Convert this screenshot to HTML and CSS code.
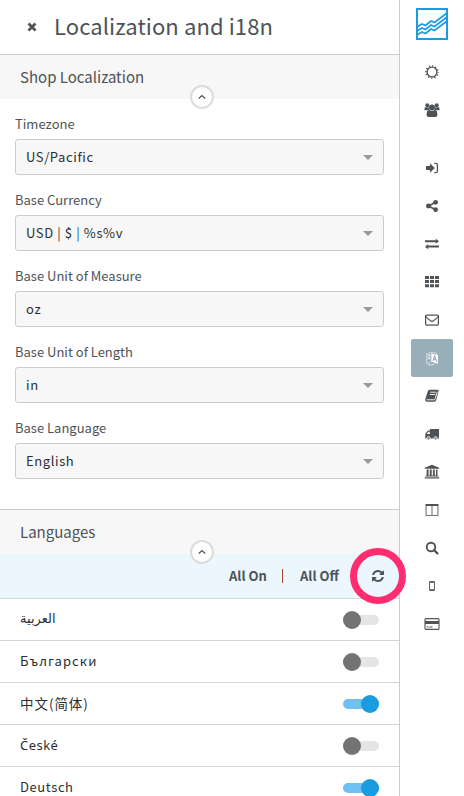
FILE: index.html
```html
<!DOCTYPE html>
<html lang="en">
<head>
<meta charset="utf-8">
<title>Localization and i18n</title>
<link rel="stylesheet" href="styles.css">
</head>
<body>
<div class="app">
  <main class="panel">
    <header class="panel-header">
      <svg class="close" viewBox="0 0 10 10"><path d="M1.5 1.5l7 7M8.500 1.500l-7 7" stroke="currentColor" stroke-width="2.7"/></svg>
      <h1 class="title">Localization and i18n</h1>
    </header>

    <section class="shop">
      <div class="section-head">
        <h2 class="section-title">Shop Localization</h2>
        <span class="collapse"><svg viewBox="0 0 10 10"><path d="M1.800 6.500L5 3.500l3.200 3"/></svg></span>
      </div>
      <div class="fields">
        <div class="field"><div class="label">Timezone</div><div class="select"><span>US/Pacific</span><i class="caret"></i></div></div>
        <div class="field"><div class="label">Base Currency</div><div class="select"><span>USD <span class="bar-red">|</span> $ <span class="bar-blue">|</span> %s%v</span><i class="caret"></i></div></div>
        <div class="field"><div class="label">Base Unit of Measure</div><div class="select"><span>oz</span><i class="caret"></i></div></div>
        <div class="field"><div class="label">Base Unit of Length</div><div class="select"><span>in</span><i class="caret"></i></div></div>
        <div class="field"><div class="label">Base Language</div><div class="select"><span>English</span><i class="caret"></i></div></div>
      </div>
    </section>

    <section class="languages">
      <div class="section-head">
        <h2 class="section-title">Languages</h2>
        <span class="collapse"><svg viewBox="0 0 10 10"><path d="M1.800 6.500L5 3.500l3.200 3"/></svg></span>
      </div>
      <div class="toolbar">
        <b class="all-on">All On</b>
        <i class="divider"></i>
        <b class="all-off">All Off</b>
        <span class="refresh">
          <svg viewBox="0 0 1536 1536"><path fill="currentColor" d="M1511 928q0 5-1 7-64 268-268 434.500T764 1536q-146 0-282.500-55T238 1324l-129 129q-19 19-45 19t-45-19-19-45V960q0-26 19-45t45-19h448q26 0 45 19t19 45-19 45l-137 137q71 66 161 102t187 36q134 0 250-65t186-179q11-17 53-117 8-23 30-23h192q13 0 22.500 9.500t9.500 22.500zm25-800v448q0 26-19 45t-45 19h-448q-26 0-45-19t-19-45 19-45l138-138Q969 256 768 256q-134 0-250 65T332 500q-11 17-53 117-8 23-30 23H50q-13 0-22.500-9.500T18 608v-7q65-268 270-434.500T768 0q146 0 284 55.500T1297 212l130-129q19-19 45-19t45 19 19 45z"/></svg>
          <i class="highlight"></i>
        </span>
      </div>
      <div class="row"><span class="arabic" lang="ar">العربية</span><i class="toggle"></i></div>
      <div class="row"><span class="wide" lang="bg">Български</span><i class="toggle"></i></div>
      <div class="row"><span class="chinese" lang="zh">中文(简体)</span><i class="toggle on"></i></div>
      <div class="row"><span class="czech" lang="cs">České</span><i class="toggle"></i></div>
      <div class="row"><span>Deutsch</span><i class="toggle on"></i></div>
    </section>
  </main>

  <nav class="rail">
    <svg class="logo" viewBox="0 0 32 32"><rect x="1" y="1" width="30" height="30" fill="none" stroke="#1b9be0" stroke-width="2"/><g fill="none" stroke="#1b9be0" stroke-width="1.700"><path d="M1 19l5-3 3.500 1.500L15 13l3.500 1.500L31 5"/><path d="M1 23l5-3 3.500 1.500L15 17l3.500 1.500L31 9"/><path d="M1 27l5-3 3.500 1.500L15 21l3.500 1.500L31 13"/></g></svg>

    <a class="item"><svg viewBox="0 0 16 16" class="line"><circle cx="8" cy="8" r="4.900" stroke-width="1.300"/><circle cx="8" cy="8" r="6.100" stroke-width="1.400" stroke-dasharray="1.300 1.894" stroke-dashoffset=".65"/></svg></a>
    <a class="item users"><svg viewBox="0 0 16 16"><circle cx="3.300" cy="3.200" r="2"/><circle cx="12.700" cy="3.200" r="2"/><path d="M.5 8.300V6.800Q.6 5.200 1.700 5q1.600.9 3 .1.100 2.200 1 3.200zM15.500 8.300V6.800q-.1-1.600-1.200-1.800-1.600.9-3 .1-.1 2.200-1 3.200z"/><circle cx="8" cy="5.400" r="3"/><path d="M2.600 13.100q0-5 2.800-5 2.600 1.900 5.200 0 2.800 0 2.800 5 0 1.900-1.900 1.900h-7q-1.900 0-1.900-1.900z"/></svg></a>
    <a class="item"><svg viewBox="0 0 16 16"><path d="M2 6h4V3.300L10.800 8 6 12.700V10H2z"/><path class="line" stroke-width="1.300" d="M10.200 3.300h1.700q1.500 0 1.500 1.500v6.400q0 1.500-1.500 1.500h-1.700"/></svg></a>
    <a class="item"><svg viewBox="0 0 16 16"><path class="line" stroke-width="1.600" d="M11.600 4.200L4.500 8l7.100 3.800"/><circle cx="4.400" cy="8" r="2.400"/><circle cx="11.600" cy="4.300" r="2.400"/><circle cx="11.600" cy="11.700" r="2.400"/></svg></a>
    <a class="item"><svg viewBox="0 0 16 16"><path d="M1 4.300h10.800V2.700L15 5.300l-3.200 2.500V6.200H1zM15 9.600H4.200V8.100L1 10.700l3.200 2.500v-1.600H15z"/></svg></a>
    <a class="item"><svg viewBox="0 0 16 16"><path class="line" stroke-width="3" stroke-dasharray="4 1" d="M1 3.500h14M1 7.600h14M1 11.700h14"/></svg></a>
    <a class="item"><svg viewBox="0 0 16 16" class="line"><rect x="1.600" y="3.100" width="12.800" height="10" rx="1" stroke-width="1.200"/><path stroke-width="1.100" d="M1.800 4.500q1.200 1.700 4.700 4.300 1.500 1.200 3 0 3.500-2.600 4.700-4.300"/></svg></a>
    <a class="item active"><svg viewBox="0 0 16 16"><path d="M7.600 3.400L14 4.900v8.800L7.600 11.700z"/><path d="M2.400 3.700l5-1.300v9.300l-5 1.700zM7.200 2l5.400 1v1" fill="none" stroke="#fff" stroke-width=".6" opacity=".8"/><path d="M3.300 5.500l3-.8M4.700 4v1.200M3.500 10q2.300-2 2.500-5M3.700 6.700q1 1.800 2.700 2.400M4 14.500q3.500 1 6.500-.3" fill="none" stroke="#fff" stroke-width=".7"/><path d="M9 10.800l1.700-4.800 2 5.900M9.700 9.200l2.300.5" fill="none" stroke="#98afba" stroke-width="1.100"/></svg></a>
    <a class="item"><svg viewBox="0 0 16 16"><path d="M5.500 1.700h8q1.500.1 1.200 1.400l-2.500 9q-.4 1.700-2 1.700H3Q.8 13.600 1.200 11.500L3.800 3.200q.5-1.300 1.700-1.500z"/><path d="M6.300 4.200h5.500M5.700 6.500h5.500M2.500 11.800h7.600q.8 0 1.200-1.200l2-7" fill="none" stroke="#fff" stroke-width=".9"/></svg></a>
    <a class="item"><svg viewBox="0 0 16 16"><path d="M6 3h9v9.500H1.300V7.700l2.700-3.200h2z"/><path d="M2.600 8l1.900-2.300h1.300V8z" fill="#fff"/><circle cx="4.500" cy="12.300" r="1.700" fill="#888" stroke="#fff" stroke-width=".7"/><circle cx="11.600" cy="12.300" r="1.700" fill="#888" stroke="#fff" stroke-width=".7"/></svg></a>
    <a class="item"><svg viewBox="0 0 16 16"><path d="M8 .8l7.200 3v1H.8v-1zM2.600 5.500h2v6h1.200v-6h1.900v6h1.200v-6h1.900v6H12v-6h1.500v6h.8v1H1.700v-1h.9zM.8 13.200h14.400v1.400H.8z"/></svg></a>
    <a class="item"><svg viewBox="0 0 16 16" class="line"><path d="M2.100 3.500v10h11.800v-10M8 3.500v10" stroke-width="1.100" opacity=".8"/><path d="M1.500 3h13" stroke-width="2"/></svg></a>
    <a class="item"><svg viewBox="0 0 16 16" class="line"><circle cx="7" cy="7" r="4.300" stroke-width="1.900"/><path d="M10.200 10.200l3.200 3.200" stroke-width="2.200" stroke-linecap="round"/></svg></a>
    <a class="item"><svg viewBox="0 0 16 16"><path fill-rule="evenodd" d="M6.200 3h3.600q1.100 0 1.100 1.100v7.800q0 1.100-1.100 1.100H6.200q-1.100 0-1.100-1.100V4.100Q5.100 3 6.200 3zM6 4.700v6.500h4V4.700z"/></svg></a>
    <a class="item"><svg viewBox="0 0 16 16"><rect class="line" x="1" y="2.600" width="14" height="10.800" rx="1" stroke-width="1.100"/><path d="M1 5h14v3H1zM2.700 10.500h1.800v1H2.700zM5.300 10.500h3.200v1H5.300z"/></svg></a>
  </nav>
</div>
</body>
</html>
```
FILE: styles.css
```css
* { box-sizing: border-box; }
body {
  margin: 0;
  background: #fff;
  color: #4d5356;
  font-family: "Noto Sans CJK SC", "Noto Sans", sans-serif;
}
.app { display: flex; width: 464px; height: 796px; overflow: hidden; }
.panel { width: 400px; height: 796px; border-right: 1px solid #ccc; }
.panel-header {
  display: flex;
  align-items: center;
  height: 55px;
  padding: 0 0 1px 27px;
  border-bottom: 1px solid #ccc;
}
.close { width: 10px; height: 10px; }
.title { margin: 0 0 3px 17px; font-size: 22px; font-weight: 400; line-height: 30px; letter-spacing: .1px; white-space: nowrap; }

.section-head {
  position: relative;
  display: flex;
  align-items: center;
  height: 44px;
  padding: 0 20px 1px;
  background: #f7f7f7;
}
.section-title { margin: 0; font-size: 15px; font-weight: 400; line-height: 20px; }
.collapse {
  position: absolute;
  left: 190px;
  bottom: -10px;
  z-index: 1;
  display: flex;
  align-items: center;
  justify-content: center;
  width: 24px;
  height: 24px;
  border: 2px solid #dcdcdc;
  border-radius: 50%;
  background: #fff;
}
.collapse svg { width: 10px; height: 10px; fill: none; stroke: #4d5356; stroke-width: 1.2; }

.fields { display: flex; flex-direction: column; gap: 15px; height: 410px; padding: 15px 15px 0; }
.label { height: 25px; font-size: 13px; line-height: 19px; white-space: nowrap; }
.select {
  display: flex;
  align-items: center;
  justify-content: space-between;
  height: 36px;
  padding: 0 10px;
  border: 1px solid #ccc;
  border-radius: 3px;
  background: #f7f7f7;
  color: #2b2f31;
  font-size: 13px;
  line-height: 20px;
  letter-spacing: .6px;
}
.caret { border: 5px solid transparent; border-top-color: #999; border-bottom: 0; }
.bar-red { color: #7a1c14; }
.bar-blue { color: #14509c; }

.languages { border-top: 1px solid #ccc; }
.toolbar {
  display: flex;
  align-items: center;
  height: 45px;
  padding-left: 229px;
  border-bottom: 1px solid #d4d4d4;
  background: #ebf6fd;
  font-size: 13px;
  line-height: 20px;
  white-space: nowrap;
}
.all-on { width: 53px; }
.divider { width: 1px; height: 14px; margin-right: 17px; background: #a34a35; }
.all-off { width: 72px; }
.refresh { position: relative; display: flex; }
.refresh svg { width: 12px; height: 12px; }
.highlight {
  position: absolute;
  left: -22px;
  top: -22px;
  z-index: 2;
  width: 56px;
  height: 56px;
  border: 7px solid #ff2d6f;
  border-radius: 50%;
}
.row {
  display: flex;
  align-items: center;
  justify-content: space-between;
  height: 42px;
  padding: 0 20px;
  border-bottom: 1px solid #d4d4d4;
  color: #2b2f31;
  font-size: 13px;
  line-height: 20px;
  letter-spacing: .6px;
}
.row span { margin-bottom: 2px; }
.wide { letter-spacing: 1.1px; }
.chinese { font-size: 13.500px; letter-spacing: .95px; }
.row .arabic { margin-bottom: 1px; font-family: "DejaVu Sans", sans-serif; font-size: 13px; letter-spacing: 0; }
.row .czech { margin-bottom: 1px; font-family: "Noto Sans", sans-serif; letter-spacing: .45px; }
.toggle { position: relative; width: 36px; height: 10px; border-radius: 5px; background: #e5e5e5; }
.toggle::after {
  content: "";
  position: absolute;
  left: 0;
  top: -4px;
  width: 18px;
  height: 18px;
  border-radius: 50%;
  background: #737373;
}
.toggle.on { background: #6ec1f0; }
.toggle.on::after { left: 18px; background: #1b9be0; }

.rail { display: flex; flex-direction: column; align-items: center; width: 64px; padding-top: 8px; }
.logo { width: 32px; height: 32px; margin-bottom: 13px; flex: none; }
.item { display: flex; align-items: center; justify-content: center; width: 42px; height: 38px; flex: none; border-radius: 2px; }
.item svg { width: 16px; height: 16px; fill: #4d5356; }
.item .line, .item svg.line { fill: none; stroke: #4d5356; }
.users { margin-bottom: 20px; }
.active { background: #98afba; }
.active svg { fill: #fff; }
```
